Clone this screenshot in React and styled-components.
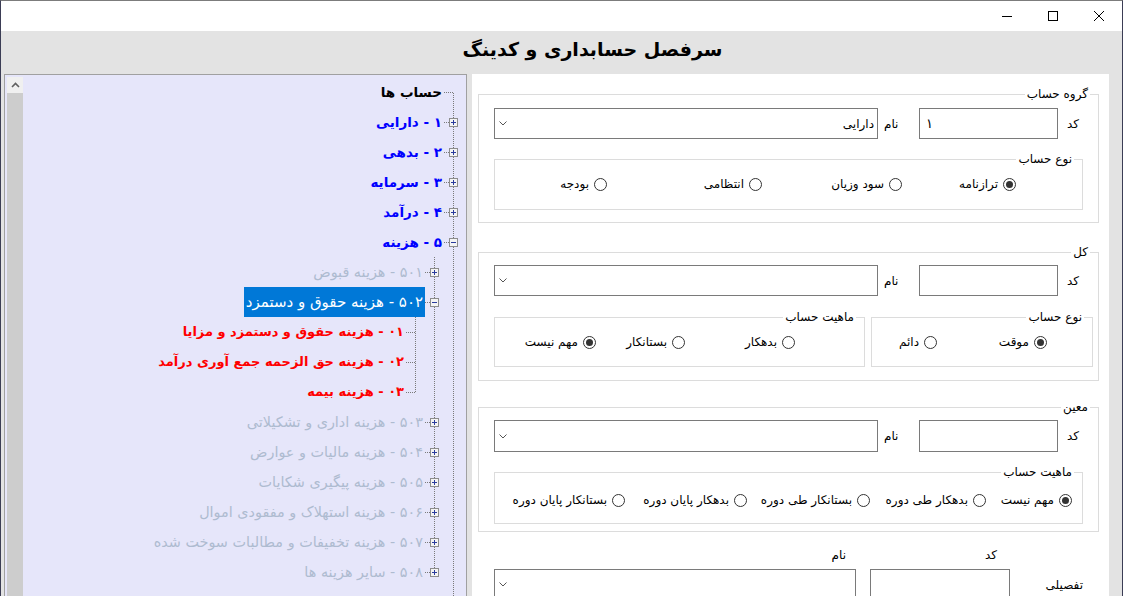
import React from "react";
import styled, { createGlobalStyle } from "styled-components";

const GlobalStyle = createGlobalStyle`
  html, body {
    margin: 0;
    padding: 0;
    overflow: hidden;
  }
  body {
    font-family: "DejaVu Sans", sans-serif;
  }
`;

const Window = styled.div`
  width: 1123px;
  height: 596px;
  box-sizing: border-box;
  display: flex;
  flex-direction: column;
  background: #e3e3e3;
  border-top: 1px solid #7c7c7c;
  border-left: 1px solid #3b3d55;
  border-right: 1px solid #3b3d55;
  overflow: hidden;
`;

const TitleBar = styled.div`
  height: 30px;
  flex: none;
  background: #fff;
  display: flex;
  justify-content: flex-end;
`;

const WinButton = styled.div`
  width: 46px;
  height: 30px;
  display: flex;
  align-items: center;
  justify-content: center;
`;

const Header = styled.div`
  height: 43px;
  flex: none;
  display: flex;
  justify-content: center;
  padding-left: 62px;
  direction: rtl;
  font-size: 19px;
  font-weight: 700;
  line-height: 37px;
  color: #000;
`;

const Body = styled.div`
  flex: 1;
  min-height: 0;
  display: flex;
  padding-left: 3px;
  gap: 5px;
`;

/* ---------- tree ---------- */

const TreeBox = styled.div`
  width: 463px;
  flex: none;
  box-sizing: border-box;
  border: 1px solid #a0a0a0;
  border-bottom: none;
  background: #e6e6fa;
  padding: 2px 3px 0 2px;
  display: flex;
  overflow: hidden;
`;

const ScrollBar = styled.div`
  width: 16px;
  flex: none;
  display: flex;
  flex-direction: column;
  background: #cdcdcd;
`;

const ScrollArrow = styled.div`
  height: 16px;
  background: #f0f0f0;
  display: flex;
  align-items: center;
  justify-content: center;
`;

const TreeList = styled.div`
  flex: 1;
  direction: rtl;
  display: flex;
  flex-direction: column;
`;

const TreeRow = styled.div`
  display: flex;
  height: 30px;
  align-items: center;
  flex: none;
`;

const toneStyle = {
  root: { color: "#000", weight: 700, size: 13.5 },
  group: { color: "#0000ff", weight: 700, size: 13.5 },
  sub: { color: "#aebbd0", weight: 400, size: 14.4 },
  leaf: { color: "#ff0000", weight: 700, size: 13 },
  selected: { color: "#fff", weight: 400, size: 15 },
};

const NodeLabel = styled.span`
  height: 30px;
  line-height: 30px;
  padding: 0 2px;
  white-space: nowrap;
  font-size: ${(p) => toneStyle[p.$tone].size}px;
  font-weight: ${(p) => toneStyle[p.$tone].weight};
  color: ${(p) => toneStyle[p.$tone].color};
  background: ${(p) => (p.$tone === "selected" ? "#0078d7" : "transparent")};
`;

const dots = { stroke: "#7a7a7a", strokeWidth: 1, strokeDasharray: "1 1" };

function Guide({ kind, box }) {
  return (
    <svg width="19" height="30" style={{ flex: "none", display: "block" }}>
      {(kind === "pipe" || kind === "tee") && (
        <line x1="9.5" y1="0" x2="9.5" y2="30" {...dots} />
      )}
      {kind === "end" && <line x1="9.5" y1="0" x2="9.5" y2="16" {...dots} />}
      {kind === "first" && <line x1="9.5" y1="16" x2="9.5" y2="30" {...dots} />}
      {kind !== "pipe" && kind !== "blank" && (
        <line x1="0" y1="15.5" x2="9" y2="15.5" {...dots} />
      )}
      {box && (
        <g>
          <rect x="5.5" y="11.5" width="8" height="8" fill="#f4f4f4" stroke="#8d8d8d" />
          <line x1="7" y1="15.5" x2="12" y2="15.5" stroke="#2a3c9c" />
          {box === "plus" && <line x1="9.5" y1="13" x2="9.5" y2="18" stroke="#2a3c9c" />}
        </g>
      )}
    </svg>
  );
}

const sub = (t) => ({ text: t, tone: "sub", kids: true });

const tree = [
  { text: "حساب ها", tone: "root" },
  { text: "۱ - دارایی", tone: "group", kids: true },
  { text: "۲ - بدهی", tone: "group", kids: true },
  { text: "۳ - سرمایه", tone: "group", kids: true },
  { text: "۴ - درآمد", tone: "group", kids: true },
  {
    text: "۵ - هزینه",
    tone: "group",
    open: [
      sub("۵۰۱ - هزینه قبوض"),
      {
        text: "۵۰۲ - هزینه حقوق و دستمزد",
        tone: "selected",
        open: [
          { text: "۰۱ - هزینه حقوق و دستمزد و مزایا", tone: "leaf" },
          { text: "۰۲ - هزینه حق الزحمه جمع آوری درآمد", tone: "leaf" },
          { text: "۰۳ - هزینه بیمه", tone: "leaf" },
        ],
      },
      sub("۵۰۳ - هزینه اداری و تشکیلاتی"),
      sub("۵۰۴ - هزینه مالیات و عوارض"),
      sub("۵۰۵ - هزینه پیگیری شکایات"),
      sub("۵۰۶ - هزینه استهلاک و مفقودی اموال"),
      sub("۵۰۷ - هزینه تخفیفات و مطالبات سوخت شده"),
      sub("۵۰۸ - سایر هزینه ها"),
    ],
  },
  { text: "۶ - حساب های انتظامی", tone: "group", kids: true },
  { text: "۷ - حساب های بودجه", tone: "group", kids: true },
];

function flatten(nodes, guides = [], depth = 0, out = []) {
  nodes.forEach((n, i) => {
    const last = i === nodes.length - 1;
    const kind = last ? "end" : depth === 0 && i === 0 ? "first" : "tee";
    const box = n.open ? "minus" : n.kids ? "plus" : null;
    out.push({ ...n, guides, kind, box });
    if (n.open) flatten(n.open, [...guides, !last], depth + 1, out);
  });
  return out;
}

function Tree() {
  const rows = flatten(tree);
  return (
    <TreeBox>
      <ScrollBar>
        <ScrollArrow>
          <svg width="9" height="6" viewBox="0 0 9 6">
            <polyline points="1,5 4.5,1.5 8,5" fill="none" stroke="#606060" strokeWidth="1.6" />
          </svg>
        </ScrollArrow>
      </ScrollBar>
      <TreeList>
        {rows.map((r, i) => (
          <TreeRow key={i}>
            {r.guides.map((g, j) => (
              <Guide key={j} kind={g ? "pipe" : "blank"} />
            ))}
            <Guide kind={r.kind} box={r.box} />
            <NodeLabel $tone={r.tone}>{r.text}</NodeLabel>
          </TreeRow>
        ))}
      </TreeList>
    </TreeBox>
  );
}

/* ---------- form ---------- */

const FormPanel = styled.div`
  width: 637px;
  flex: none;
  box-sizing: border-box;
  background: #fff;
  direction: rtl;
  padding: 0 10px 0 6px;
  font-size: 12px;
  color: #000;
`;

const Group = styled.fieldset`
  margin: ${(p) => p.$mt || 0}px 0 0;
  padding: ${(p) => p.$pt || 0}px ${(p) => (p.$inner ? 0 : 15)}px ${(p) => p.$pb || 0}px;
  border: 1px solid #dcdcdc;
  min-width: 0;
  box-sizing: border-box;
  flex: ${(p) => (p.$grow ? 1 : "none")};
  width: ${(p) => (p.$w ? `${p.$w}px` : "auto")};
`;

const Legend = styled.legend`
  padding: 0 2px;
  margin-right: ${(p) => (p.$inner ? 8 : -7)}px;
  font-size: 12px;
  line-height: 14px;
`;

const FieldRow = styled.div`
  display: flex;
  align-items: stretch;
  height: ${(p) => p.$h}px;
`;

const FieldLabel = styled.span`
  width: ${(p) => p.$w}px;
  flex: none;
  box-sizing: border-box;
  padding-left: ${(p) => p.$pl}px;
  display: flex;
  align-items: center;
  justify-content: flex-end;
  white-space: nowrap;
`;

const TextBox = styled.div`
  width: ${(p) => p.$w || 139}px;
  flex: none;
  box-sizing: border-box;
  border: 1px solid #7a7a7a;
  background: #fff;
  display: flex;
  align-items: center;
  justify-content: flex-end;
  padding: 0 6px;
  font-size: 13px;
`;

const ComboBox = styled.div`
  flex: 1;
  box-sizing: border-box;
  border: 1px solid #7a7a7a;
  background: #fff;
  display: flex;
  align-items: center;
  justify-content: space-between;
  padding: 0 3px 0 4px;
  font-size: 12px;
`;

function Chevron() {
  return (
    <svg width="8" height="5" viewBox="0 0 8 5" style={{ display: "block" }}>
      <polyline points="0.5,0.5 4,4 7.5,0.5" fill="none" stroke="#555" strokeWidth="1" />
    </svg>
  );
}

const SubRow = styled.div`
  display: flex;
  gap: 6px;
  margin: 0 -10px 0 0;
`;

const RadioRow = styled.div`
  display: flex;
  align-items: center;
  height: 20px;
  padding-right: ${(p) => p.$pr}px;
`;

const RadioItem = styled.label`
  display: flex;
  align-items: center;
  gap: 5px;
  flex: none;
  width: ${(p) => (p.$w ? `${p.$w}px` : "auto")};
  white-space: nowrap;
`;

const RadioDot = styled.span`
  width: 13px;
  height: 13px;
  box-sizing: border-box;
  border: 1px solid #333;
  border-radius: 50%;
  display: flex;
  align-items: center;
  justify-content: center;
  flex: none;
  &::after {
    content: "";
    width: 7px;
    height: 7px;
    border-radius: 50%;
    background: #333;
    display: ${(p) => (p.$on ? "block" : "none")};
  }
`;

function Radio({ label, on, w }) {
  return (
    <RadioItem $w={w}>
      <RadioDot $on={on} />
      <span>{label}</span>
    </RadioItem>
  );
}

function CodeNameRow({ h, code, name }) {
  return (
    <FieldRow $h={h}>
      <FieldLabel $w={25} $pl={9}>کد</FieldLabel>
      <TextBox>{code}</TextBox>
      <FieldLabel $w={41} $pl={6}>نام</FieldLabel>
      <ComboBox>
        <span>{name}</span>
        <Chevron />
      </ComboBox>
    </FieldRow>
  );
}

const DetailGrid = styled.div`
  display: grid;
  grid-template-columns: 73px 154px 1fr;
  grid-template-rows: 14px 31px;
  row-gap: 7px;
  margin: 16px 16px 0;
  line-height: 14px;
`;

const HeadCell = styled.span`
  grid-column: ${(p) => p.$col};
  padding-right: ${(p) => p.$pr}px;
`;

const DetailLabel = styled.span`
  display: flex;
  align-items: center;
`;

function Form() {
  return (
    <FormPanel>
      <Group $mt={13} $pt={7} $pb={12}>
        <Legend>گروه حساب</Legend>
        <CodeNameRow h={31} code="۱" name="دارایی" />
        <Group $inner $mt={13} $pt={8} $pb={15}>
          <Legend $inner>نوع حساب</Legend>
          <RadioRow $pr={66}>
            <Radio label="ترازنامه" on w={114} />
            <Radio label="سود وزیان" w={140} />
            <Radio label="انتظامی" w={155} />
            <Radio label="بودجه" />
          </RadioRow>
        </Group>
      </Group>

      <Group $mt={22} $pt={6} $pb={13}>
        <Legend>کل</Legend>
        <CodeNameRow h={31} />
        <SubRow>
          <Group $inner $w={222} $mt={14} $pt={8} $pb={14}>
            <Legend $inner>نوع حساب</Legend>
            <RadioRow $pr={45}>
              <Radio label="موقت" on w={110} />
              <Radio label="دائم" />
            </RadioRow>
          </Group>
          <Group $inner $grow $mt={14} $pt={8} $pb={14}>
            <Legend $inner>ماهیت حساب</Legend>
            <RadioRow $pr={69}>
              <Radio label="بدهکار" w={110} />
              <Radio label="بستانکار" w={89} />
              <Radio label="مهم نیست" on />
            </RadioRow>
          </Group>
        </SubRow>
      </Group>

      <Group $mt={19} $pt={6} $pb={7}>
        <Legend>معین</Legend>
        <CodeNameRow h={32} />
        <Group $inner $mt={13} $pt={11} $pb={13}>
          <Legend $inner>ماهیت حساب</Legend>
          <RadioRow $pr={10}>
            <Radio label="مهم نیست" on w={86} />
            <Radio label="بدهکار طی دوره" w={116} />
            <Radio label="بستانکار طی دوره" w={123} />
            <Radio label="بدهکار پایان دوره" w={122} />
            <Radio label="بستانکار پایان دوره" />
          </RadioRow>
        </Group>
      </Group>

      <DetailGrid>
        <HeadCell $col={2} $pr={13}>کد</HeadCell>
        <HeadCell $col={3} $pr={10}>نام</HeadCell>
        <DetailLabel>تفصیلی</DetailLabel>
        <TextBox $w={140} />
        <ComboBox>
          <span />
          <Chevron />
        </ComboBox>
      </DetailGrid>
    </FormPanel>
  );
}

/* ---------- window ---------- */

function WindowControls() {
  const s = { stroke: "#000", strokeWidth: 1, fill: "none" };
  return (
    <>
      <WinButton>
        <svg width="10" height="10">
          <line x1="0" y1="5.5" x2="10" y2="5.5" {...s} />
        </svg>
      </WinButton>
      <WinButton>
        <svg width="10" height="10">
          <rect x="0.5" y="0.5" width="9" height="9" {...s} />
        </svg>
      </WinButton>
      <WinButton>
        <svg width="10" height="10">
          <line x1="0" y1="0" x2="10" y2="10" {...s} />
          <line x1="10" y1="0" x2="0" y2="10" {...s} />
        </svg>
      </WinButton>
    </>
  );
}

export default function App() {
  return (
    <>
      <GlobalStyle />
      <Window>
        <TitleBar>
          <WindowControls />
        </TitleBar>
        <Header>سرفصل حسابداری و کدینگ</Header>
        <Body>
          <Tree />
          <Form />
        </Body>
      </Window>
    </>
  );
}
